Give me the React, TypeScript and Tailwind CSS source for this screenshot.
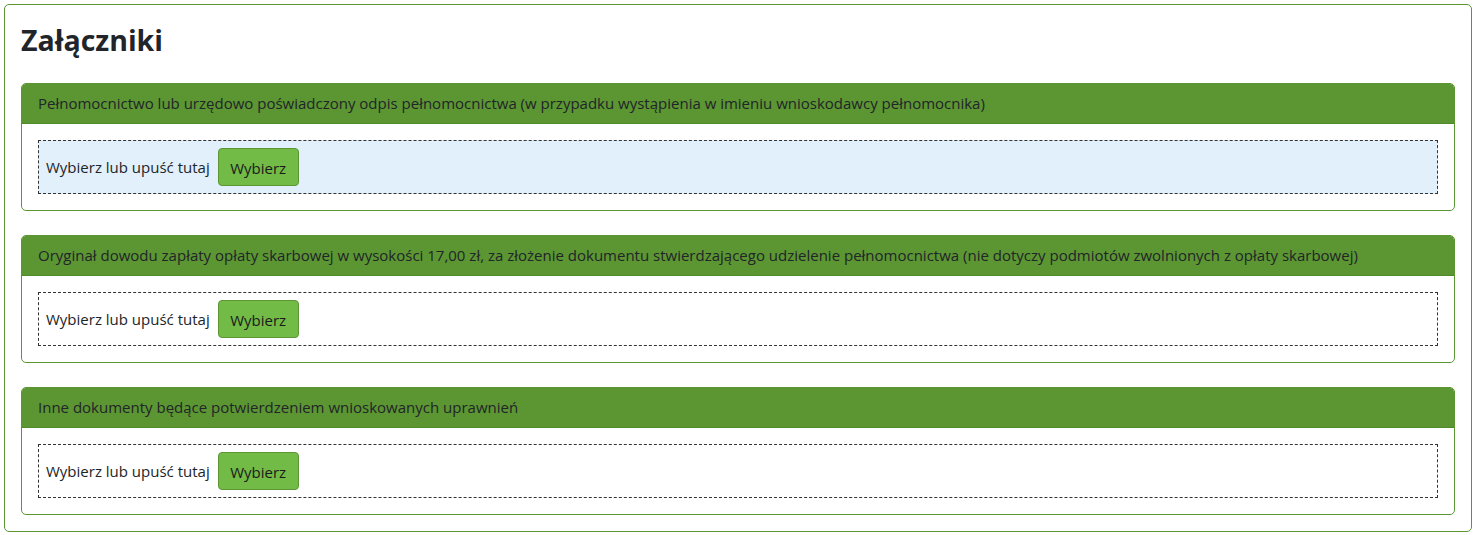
import React from "react";

const cards = [
  "Pełnomocnictwo lub urzędowo poświadczony odpis pełnomocnictwa (w przypadku wystąpienia w imieniu wnioskodawcy pełnomocnika)",
  "Oryginał dowodu zapłaty opłaty skarbowej w wysokości 17,00 zł, za złożenie dokumentu stwierdzającego udzielenie pełnomocnictwa (nie dotyczy podmiotów zwolnionych z opłaty skarbowej)",
  "Inne dokumenty będące potwierdzeniem wnioskowanych uprawnień",
];

export default function App() {
  return (
    <div
      className="bg-white p-[4px] text-[#212529]"
      style={{ fontFamily: '"Open Sans", "Noto Sans", sans-serif' }}
    >
      <div className="border border-[#5c9632] rounded-[5px] px-[16px] pt-[16px] pb-[16px]">
        <h2 className="text-[28.5px] font-bold leading-[38px] mb-[24px] text-[#212529]">Załączniki</h2>
        <div className="flex flex-col gap-[24px]">
          {cards.map((t, i) => (
            <div key={i} className="border border-[#5c9632] rounded-[5px] overflow-hidden">
              <div className="bg-[#5c9632] h-[40px] px-[16px] flex items-center text-[15px] border-b border-[#4f8a28]">
                {t}
              </div>
              <div className="p-[16px]">
                <div
                  className={`border border-dashed border-[#333] h-[54px] flex items-center px-[7px] gap-[8px] ${
                    i === 0 ? "bg-[#e1f0fa]" : "bg-white"
                  }`}
                >
                  <span className="text-[15px]">Wybierz lub upuść tutaj</span>
                  <button className="bg-[#72bb46] border border-[#5c9632] rounded-[4px] h-[38px] w-[81px] pt-[2px] text-[15px] text-[#1a1a1a]">
                    Wybierz
                  </button>
                </div>
              </div>
            </div>
          ))}
        </div>
      </div>
    </div>
  );
}
